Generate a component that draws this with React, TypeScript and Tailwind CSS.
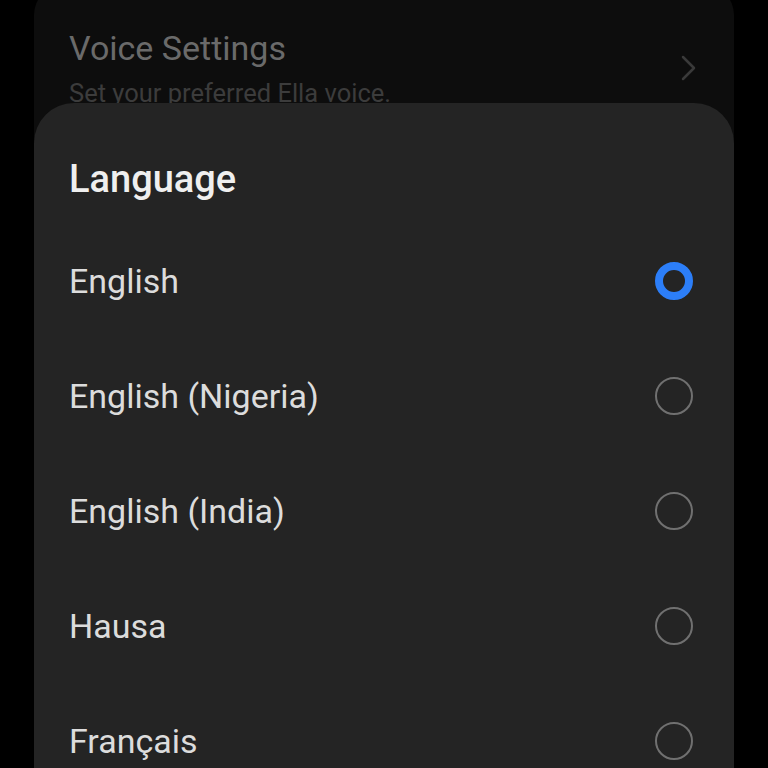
import React from "react";

const languages = [
  { name: "English", selected: true },
  { name: "English (Nigeria)", selected: false },
  { name: "English (India)", selected: false },
  { name: "Hausa", selected: false },
  { name: "Français", selected: false },
];

export default function App() {
  return (
    <div
      className="relative h-[768px] w-[768px] overflow-hidden bg-black"
      style={{ fontFamily: "Roboto, 'Noto Sans', sans-serif" }}
    >
      {/* Background settings card */}
      <div className="mx-[34px] -mt-[15px] h-[200px] rounded-[30px] bg-[#0d0d0d] pl-[35px] pr-[37px] pt-[43px]">
        <div className="flex items-start justify-between">
          <div>
            <div className="text-[34px] leading-[40px] text-[#6a6a6a]">Voice Settings</div>
            <div className="mt-[10px] text-[25.5px] leading-[30px] text-[#3c3c3c]">
              Set your preferred Ella voice.
            </div>
          </div>
          <svg width="16" height="26" viewBox="0 0 16 26" className="mt-[27px]" fill="none">
            <path d="M2 2 L13 13 L2 24" stroke="#3a3a3a" strokeWidth="2.5" strokeLinecap="round" strokeLinejoin="round" />
          </svg>
        </div>
      </div>

      {/* Bottom sheet */}
      <div className="absolute left-[34px] right-[34px] top-[103px] bottom-[-60px] rounded-t-[40px] bg-[#242424] pl-[35px] pr-[41px] pt-[54px]">
        <div className="text-[38px] font-medium leading-[44px] text-[#efefef]">Language</div>
        <div className="mt-[22px] flex flex-col">
          {languages.map((l) => (
            <div key={l.name} className="flex h-[115px] items-center justify-between">
              <span className="text-[34px] leading-[40px] text-[#dcdcdc]">{l.name}</span>
              {l.selected ? (
                <span className="box-border block h-[38px] w-[38px] rounded-full border-[8px] border-[#2c7ef8]" />
              ) : (
                <span className="box-border block h-[38px] w-[38px] rounded-full border-[2.5px] border-[#707070]" />
              )}
            </div>
          ))}
        </div>
      </div>
    </div>
  );
}
